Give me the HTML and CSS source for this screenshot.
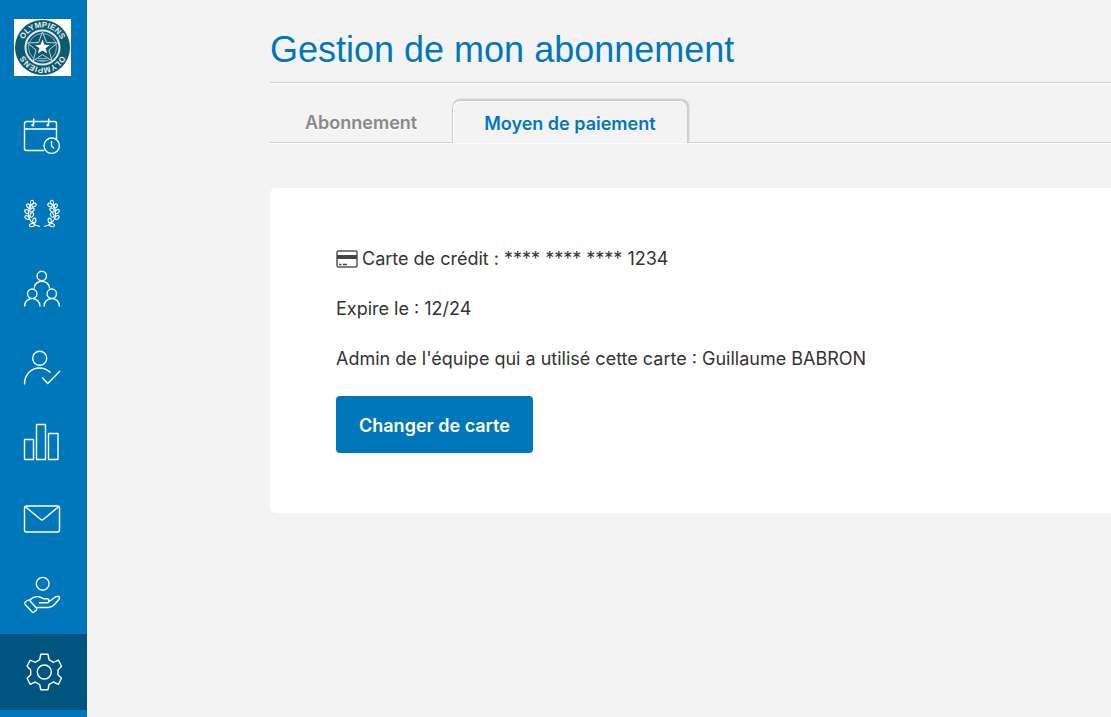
FILE: index.html
```html
<!DOCTYPE html>
<html lang="fr">
<head>
  <meta charset="UTF-8" />
  <meta name="viewport" content="width=device-width,initial-scale=1.0" />
  <title>Gestion de mon abonnement</title>
  <link rel="stylesheet" href="styles.css">
</head>
<body>
  <nav class="sidebar" aria-label="Menu principal">
    <a class="team-logo" href="#" aria-label="Olympiens">
      <svg viewBox="0 0 57 57">
        <defs>
          <path id="arcTop" d="M8.500 28.500a20 20 0 0 1 40 0" />
          <path id="arcBottom" d="M48.500 28.500a20 20 0 0 1-40 0" />
        </defs>
        <rect width="57" height="57" fill="#fff" />
        <circle cx="28.500" cy="28.500" r="27.500" fill="#0b5a70" />
        <circle cx="28.500" cy="28.500" r="17" fill="#0b5a70" stroke="#dbe8ee" stroke-width="2" />
        <circle cx="28.500" cy="28.500" r="14" fill="none" stroke="#8fb4c2" />
        <path d="M28.500 13l4 10.500 11 .5-8.600 7 3 10.800-9.400-6.200-9.400 6.200 3-10.800-8.600-7 11-.5z" fill="#0b5a70" stroke="#c3d8e0" />
        <path d="M28.500 20.500l2 5.200 5.500.2-4.400 3.400 1.600 5.200-4.700-3-4.700 3 1.600-5.200-4.400-3.400 5.500-.2z" fill="#fff" />
        <path d="M24 39.500h9M25 41.500h7" stroke="#8fb4c2" />
        <text class="logo-text"><textPath href="#arcTop" startOffset="50%">OLYMPIENS</textPath></text>
        <text class="logo-text"><textPath href="#arcBottom" startOffset="50%">OLYMPIENS</textPath></text>
      </svg>
    </a>
    <a class="nav-item" href="#" aria-label="Calendrier">
      <svg viewBox="0 0 40 48">
        <path d="M22 41.500H4.500a2 2 0 0 1-2-2v-25a2 2 0 0 1 2-2h28a2 2 0 0 1 2 2V30M2.500 20h32" />
        <path d="M11.700 9.500v5.500M26.700 9.500v5.500" />
        <circle class="dot" cx="10.800" cy="16" r="1.500" />
        <circle class="dot" cx="25.800" cy="16" r="1.500" />
        <circle cx="29.700" cy="36.700" r="7.700" />
        <path d="M29.500 32v5l2.500 2.500" />
      </svg>
    </a>
    <a class="nav-item" href="#" aria-label="Compétitions">
      <svg viewBox="0 0 40 48">
        <g id="branch" class="laurel">
          <path d="M18 40.500l-4-1.200C6.500 35.500 4 27 9 18" />
          <ellipse cx="10" cy="16.500" rx="1.500" ry="2.200" transform="rotate(10 10 16.500)" />
          <ellipse cx="12" cy="19" rx="1.600" ry="2.300" transform="rotate(65 12 19)" />
          <ellipse cx="6.500" cy="20" rx="1.600" ry="2.300" transform="rotate(-35 6.500 20)" />
          <ellipse cx="10" cy="24" rx="1.600" ry="2.400" transform="rotate(50 10 24)" />
          <ellipse cx="4.800" cy="25.500" rx="1.600" ry="2.400" transform="rotate(-45 4.800 25.500)" />
          <ellipse cx="9.800" cy="29" rx="1.600" ry="2.400" transform="rotate(30 9.800 29)" />
          <ellipse cx="5" cy="31.500" rx="1.600" ry="2.400" transform="rotate(-55 5 31.500)" />
          <ellipse cx="12.300" cy="34.500" rx="1.600" ry="2.400" transform="rotate(5 12.300 34.500)" />
          <ellipse cx="10" cy="39" rx="1.600" ry="2.600" transform="rotate(75 10 39)" />
        </g>
        <use href="#branch" transform="translate(40 0) scale(-1 1)" />
      </svg>
    </a>
    <a class="nav-item" href="#" aria-label="Équipe">
      <svg viewBox="0 0 40 48">
        <circle cx="19.800" cy="13" r="4.700" />
        <path d="M12.200 25.500c0-9.500 15.300-9.500 15.300 0" />
        <circle cx="10.200" cy="30.700" r="4.700" />
        <path d="M2.500 43.500c0-10.500 15.500-10.500 15.500 0" />
        <circle cx="29.800" cy="30.700" r="4.700" />
        <path d="M22 43.500c0-10.500 15.500-10.500 15.500 0" />
      </svg>
    </a>
    <a class="nav-item" href="#" aria-label="Présences">
      <svg viewBox="0 0 40 48">
        <circle cx="17.700" cy="18.300" r="7" />
        <path d="M2.500 44.500c0-10 6.500-16.500 15-16.500 4.500 0 8 1.700 11 4.500" />
        <path d="M20.300 37.500l5.400 6L38 31" />
      </svg>
    </a>
    <a class="nav-item" href="#" aria-label="Statistiques">
      <svg viewBox="0 0 40 48">
        <path d="M2.500 22.500h9v20h-9zM14.500 7.500h9v35h-9zM26.500 16.500h9.500v26h-9.500z" />
      </svg>
    </a>
    <a class="nav-item" href="#" aria-label="Messages">
      <svg viewBox="0 0 40 48">
        <rect x="2.500" y="12" width="35" height="26" rx="2" />
        <path d="M3.500 12.800L18.800 25.500q1.200 1 2.400 0L36.500 12.800" />
      </svg>
    </a>
    <a class="nav-item" href="#" aria-label="Cotisations">
      <svg viewBox="0 0 40 48">
        <circle cx="20.700" cy="12.800" r="6.400" />
        <path d="M7.500 29.200l-2.300.2-2.300 2.100q-.7.900 0 1.700l7.300 7.700q.8.800 1.700.2l2.400-2q.9-.9.200-1.900z" />
        <path d="M7.500 29.200c3.500-3.200 7.500-4.500 11.500-2.700l2.500 1.200h3.500c2.500 0 2.500 4 0 4h-8M26.500 31l7.300-5.200c2.500-1.300 4.800.3 3.200 2.500l-4.500 5.200c-2 2.200-3.500 3-6 3h-12" />
      </svg>
    </a>
    <a class="nav-item active" href="#" aria-label="Paramètres" aria-current="page">
      <svg viewBox="0 0 40 48">
        <path d="M18.700 6.300H26l1 5.400 4.300 2.600 5.200-2.100 3 6-3.500 3.800v4.700l3.500 3.500-3 6.100-5.200-2.300-4.300 2.700-1 5h-7.300l-1-5-4.400-2.700-5.200 2.300-3-6.100 3.600-3.500V22l-3.600-3.800 3-6 5.200 2.100 4.400-2.600z" />
        <circle cx="22.300" cy="24" r="7" />
      </svg>
    </a>
  </nav>

  <main class="content">
    <h1 class="page-title">Gestion de mon abonnement</h1>
    <div class="tabs">
      <a class="tab" href="#">Abonnement</a>
      <a class="tab active" href="#" aria-current="page">Moyen de paiement</a>
    </div>
    <section class="card">
      <p class="card-line">
        <svg class="card-icon" viewBox="0 0 22 18" aria-hidden="true">
          <rect x="1" y="1" width="20" height="16" rx="1.500" fill="none" stroke="#555" stroke-width="1.500" />
          <path d="M1 7h20" stroke="#444" stroke-width="4" />
          <path d="M3 14.500h2.500M7 14.500h4" stroke="#444" stroke-width="1.500" />
        </svg>
        Carte de crédit : **** **** **** 1234
      </p>
      <p class="card-line">Expire le : 12/24</p>
      <p class="card-line">Admin de l'équipe qui a utilisé cette carte : Guillaume BABRON</p>
      <button class="btn" type="button">Changer de carte</button>
    </section>
  </main>
</body>
</html>
```
FILE: styles.css
```css
* {
  box-sizing: border-box;
}
body {
  margin: 0;
  min-height: 100vh;
  display: flex;
  background: #f3f3f3;
  color: #333;
  font-family: Inter, "Liberation Sans", sans-serif;
  font-size: 18px;
}
.sidebar {
  width: 87px;
  flex-shrink: 0;
  background: #0077bb;
}
.team-logo {
  display: block;
  padding: 19px 16px 19px 14px;
}
.team-logo svg {
  display: block;
  width: 57px;
  height: 57px;
}
.logo-text {
  font-family: "Liberation Sans", sans-serif;
  font-size: 8px;
  font-weight: bold;
  fill: #e6f0f4;
  text-anchor: middle;
}
.nav-item {
  display: block;
  height: 76px;
  margin-bottom: 1px;
  padding: 14px 22px;
}
.nav-item:hover,
.nav-item.active {
  background: #005580;
}
.nav-item svg {
  display: block;
  width: 40px;
  height: 48px;
  overflow: visible;
  fill: none;
  stroke: #fff;
  stroke-width: 1.4;
  stroke-linejoin: round;
}
.nav-item:last-child {
  margin-bottom: 0;
}
.nav-item .dot {
  fill: #fff;
  stroke: none;
}
.laurel {
  stroke-width: 1.1;
}
.content {
  flex: 1;
  min-width: 0;
  padding: 18px 0 40px 183px;
}
.page-title {
  margin: 0;
  border-bottom: 1px solid #ccc;
  box-shadow: 0 1px 0 #fff;
  color: #0077bb;
  font-family: "Liberation Sans", Arial, sans-serif;
  font-size: 36px;
  font-weight: normal;
  line-height: 64px;
  text-shadow: 0 1px 0 #fff;
}
.tabs {
  display: flex;
  margin-top: 17px;
  border-bottom: 1px solid #ccc;
  box-shadow: 0 1px 0 #fff;
}
.tab {
  height: 42px;
  padding: 0 35px;
  color: #888;
  font-weight: 600;
  line-height: 46px;
  text-decoration: none;
  text-shadow: 0 1px 0 #fff;
}
.tab.active {
  height: 43px;
  margin-bottom: -1px;
  padding: 0 31px;
  border: 1px solid #ccc;
  border-bottom: none;
  border-radius: 8px 8px 0 0;
  background: #f3f3f3;
  box-shadow: inset 1px 1px 0 #fff, 1px -1px 2px rgba(0, 0, 0, 0.2);
  color: #0077bb;
}
.card {
  display: flex;
  flex-direction: column;
  align-items: flex-start;
  gap: 20px;
  margin-top: 45px;
  padding: 56px 66px 60px;
  border-radius: 6px 0 0 6px;
  background: #fff;
}
.card-line {
  display: flex;
  align-items: center;
  gap: 4px;
  margin: 0;
  line-height: 30px;
}
.card-icon {
  width: 22px;
  height: 18px;
}
.btn {
  margin-top: 2px;
  padding: 15px 23px 13px;
  border: none;
  border-radius: 4px;
  background: #0077bb;
  color: #fff;
  font-family: inherit;
  font-size: 18px;
  font-weight: 600;
  line-height: 29px;
  cursor: pointer;
}
.btn:hover {
  background: #005580;
}
```
